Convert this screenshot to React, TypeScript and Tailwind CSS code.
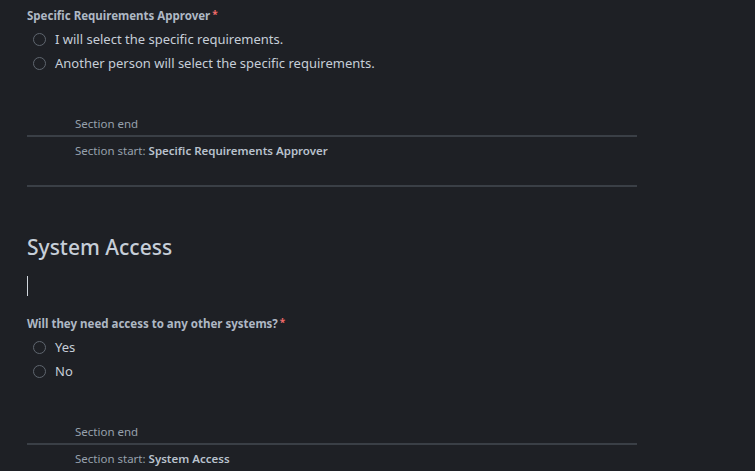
const font = { fontFamily: '"Noto Sans", "Open Sans", Arial, sans-serif' };

function Radio({ label }: { label: string }) {
  return (
    <div className="flex items-center h-6 pl-[6px]">
      <span className="w-[13px] h-[13px] rounded-full border-[1.5px] border-[#5f666f] shrink-0" />
      <span className="ml-[9px] text-[13px] text-[#c6ced8] leading-none">{label}</span>
    </div>
  );
}

function Question({ label, options }: { label: string; options: string[] }) {
  return (
    <div>
      <div className="text-[11.5px] font-bold text-[#aeb8c4] leading-[14px] flex">
        {label}
        <span className="text-[#f06a6a] ml-[2px] text-[10px] leading-[10px]">*</span>
      </div>
      <div className="mt-1 flex flex-col">
        {options.map((o) => (
          <Radio key={o} label={o} />
        ))}
      </div>
    </div>
  );
}

function SectionBreak({ title, trailing }: { title: string; trailing?: boolean }) {
  return (
    <div className="w-[610px]">
      <div className="pl-12 text-[11.5px] leading-4 text-[#97a1ad]">Section end</div>
      <div className="mt-[3px] h-[2px] bg-[#3a3f46]" />
      <div className="pl-12 mt-[6px] text-[11.5px] leading-4 text-[#97a1ad]">
        Section start: <span className="font-semibold text-[#b9c2cd]">{title}</span>
      </div>
      {trailing && <div className="mt-[26px] h-[2px] bg-[#3a3f46]" />}
    </div>
  );
}

export default function App() {
  return (
    <div className="w-[755px] h-[471px] bg-[#1e2025] overflow-hidden pl-[27px] pt-[9px]" style={font}>
      <Question
        label="Specific Requirements Approver"
        options={["I will select the specific requirements.", "Another person will select the specific requirements."]}
      />
      <div className="mt-[41px]">
        <SectionBreak title="Specific Requirements Approver" trailing />
      </div>
      <h2 className="mt-[45px] text-[21px] leading-[30px] text-[#c6ced8] font-medium">System Access</h2>
      <div className="mt-[14px] w-px h-5 bg-[#d0d6dd]" />
      <div className="mt-[21px]">
        <Question label="Will they need access to any other systems?" options={["Yes", "No"]} />
      </div>
      <div className="mt-[41px]">
        <SectionBreak title="System Access" />
      </div>
    </div>
  );
}
